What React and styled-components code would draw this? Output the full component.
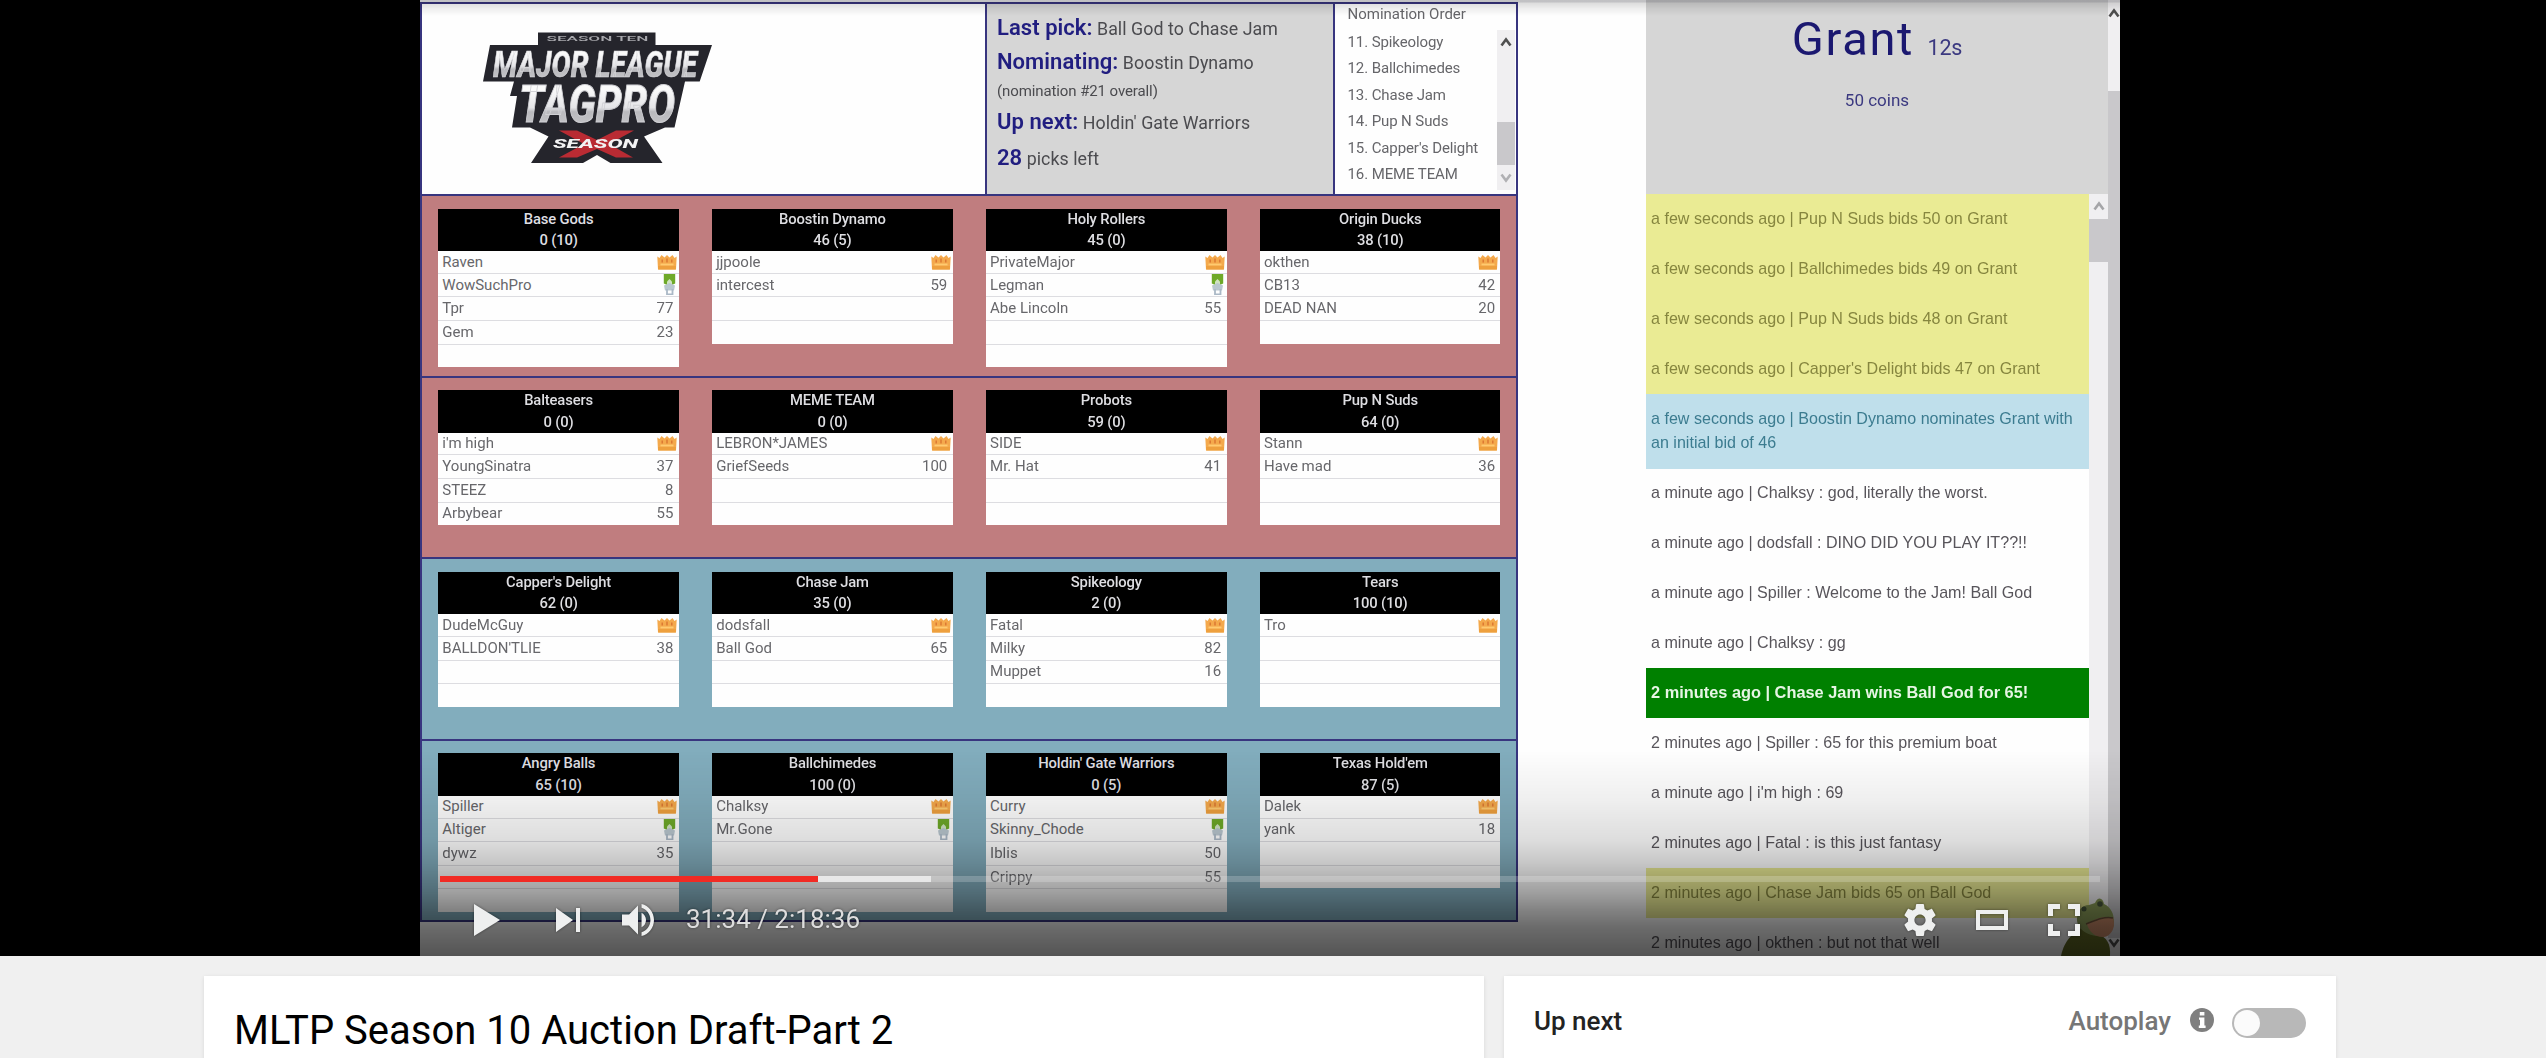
import React from 'react';
import styled, { createGlobalStyle, css } from 'styled-components';

const GlobalStyle = createGlobalStyle`
  * { box-sizing: border-box; }
  body {
    margin: 0;
    background: #f0f0f0;
    font-family: Roboto, "Liberation Sans", sans-serif;
    overflow: hidden;
  }
`;

const NAVY = '#38357f';

/* ---------- data ---------- */

const divisions = [
  {
    tone: '#c07d7f',
    teams: [
      { name: 'Base Gods', coins: '0 (10)', slots: 5, roster: [['Raven', 'crown'], ['WowSuchPro', 'medal'], ['Tpr', '77'], ['Gem', '23']] },
      { name: 'Boostin Dynamo', coins: '46 (5)', slots: 4, roster: [['jjpoole', 'crown'], ['intercest', '59']] },
      { name: 'Holy Rollers', coins: '45 (0)', slots: 5, roster: [['PrivateMajor', 'crown'], ['Legman', 'medal'], ['Abe Lincoln', '55']] },
      { name: 'Origin Ducks', coins: '38 (10)', slots: 4, roster: [['okthen', 'crown'], ['CB13', '42'], ['DEAD NAN', '20']] },
    ],
  },
  {
    tone: '#c07d7f',
    teams: [
      { name: 'Balteasers', coins: '0 (0)', slots: 4, roster: [["i'm high", 'crown'], ['YoungSinatra', '37'], ['STEEZ', '8'], ['Arbybear', '55']] },
      { name: 'MEME TEAM', coins: '0 (0)', slots: 4, roster: [['LEBRON*JAMES', 'crown'], ['GriefSeeds', '100']] },
      { name: 'Probots', coins: '59 (0)', slots: 4, roster: [['SIDE', 'crown'], ['Mr. Hat', '41']] },
      { name: 'Pup N Suds', coins: '64 (0)', slots: 4, roster: [['Stann', 'crown'], ['Have mad', '36']] },
    ],
  },
  {
    tone: '#82adbd',
    teams: [
      { name: "Capper's Delight", coins: '62 (0)', slots: 4, roster: [['DudeMcGuy', 'crown'], ["BALLDON'TLIE", '38']] },
      { name: 'Chase Jam', coins: '35 (0)', slots: 4, roster: [['dodsfall', 'crown'], ['Ball God', '65']] },
      { name: 'Spikeology', coins: '2 (0)', slots: 4, roster: [['Fatal', 'crown'], ['Milky', '82'], ['Muppet', '16']] },
      { name: 'Tears', coins: '100 (10)', slots: 4, roster: [['Tro', 'crown']] },
    ],
  },
  {
    tone: '#82adbd',
    teams: [
      { name: 'Angry Balls', coins: '65 (10)', slots: 5, roster: [['Spiller', 'crown'], ['Altiger', 'medal'], ['dywz', '35']] },
      { name: 'Ballchimedes', coins: '100 (0)', slots: 5, roster: [['Chalksy', 'crown'], ['Mr.Gone', 'medal']] },
      { name: "Holdin' Gate Warriors", coins: '0 (5)', slots: 5, roster: [['Curry', 'crown'], ['Skinny_Chode', 'medal'], ['Iblis', '50'], ['Crippy', '55']] },
      { name: "Texas Hold'em", coins: '87 (5)', slots: 4, roster: [['Dalek', 'crown'], ['yank', '18']] },
    ],
  },
];

const order = ['11. Spikeology', '12. Ballchimedes', '13. Chase Jam', '14. Pup N Suds', "15. Capper's Delight", '16. MEME TEAM'];

const messages = [
  { kind: 'bid', lines: ['a few seconds ago | Pup N Suds bids 50 on Grant'] },
  { kind: 'bid', lines: ['a few seconds ago | Ballchimedes bids 49 on Grant'] },
  { kind: 'bid', lines: ['a few seconds ago | Pup N Suds bids 48 on Grant'] },
  { kind: 'bid', lines: ["a few seconds ago | Capper's Delight bids 47 on Grant"] },
  { kind: 'nominate', lines: ['a few seconds ago | Boostin Dynamo nominates Grant with', 'an initial bid of 46'] },
  { kind: 'chat', lines: ['a minute ago | Chalksy : god, literally the worst.'] },
  { kind: 'chat', lines: ['a minute ago | dodsfall : DINO DID YOU PLAY IT??!!'] },
  { kind: 'chat', lines: ['a minute ago | Spiller : Welcome to the Jam! Ball God'] },
  { kind: 'chat', lines: ['a minute ago | Chalksy : gg'] },
  { kind: 'win', lines: ['2 minutes ago | Chase Jam wins Ball God for 65!'] },
  { kind: 'chat', lines: ['2 minutes ago | Spiller : 65 for this premium boat'] },
  { kind: 'chat', lines: ["a minute ago | i'm high : 69"] },
  { kind: 'chat', lines: ['2 minutes ago | Fatal : is this just fantasy'] },
  { kind: 'bid', lines: ['2 minutes ago | Chase Jam bids 65 on Ball God'] },
  { kind: 'chat', lines: ['2 minutes ago | okthen : but not that well'] },
];

/* ---------- player shell ---------- */

const Page = styled.div`
  height: 1058px;
  overflow: hidden;
`;

const Player = styled.div`
  display: grid;
  grid-template-columns: 420px 1700px 1fr;
  height: 956px;
  background: #000;
`;

const Screen = styled.div`
  grid-column: 2;
  position: relative;
  overflow: hidden;
  background: #fefefe;
`;

const Frame = styled.div`
  display: flex;
  height: 100%;
  filter: blur(0.6px);
`;

const TopShade = styled.div`
  position: absolute;
  inset: 0 0 auto;
  height: 16px;
  background: linear-gradient(rgba(20, 20, 30, 0.26) 0 2px, rgba(0, 0, 0, 0.13) 3px, rgba(0, 0, 0, 0.06) 9px, transparent);
`;

const BottomShade = styled.div`
  position: absolute;
  inset: auto 0 0;
  height: 206px;
  background: linear-gradient(
    transparent,
    rgba(0, 0, 0, 0.06) 24%,
    rgba(0, 0, 0, 0.13) 44%,
    rgba(0, 0, 0, 0.22) 55%,
    rgba(0, 0, 0, 0.37) 69%,
    rgba(0, 0, 0, 0.5) 79%,
    rgba(0, 0, 0, 0.58) 86%,
    rgba(0, 0, 0, 0.67)
  );
`;

/* ---------- draft board ---------- */

const Board = styled.div`
  flex: none;
  width: 1098px;
  height: 920px;
  margin-top: 2px;
  border: 2px solid ${NAVY};
`;

const BoardHeader = styled.div`
  display: grid;
  grid-template-columns: 563px 350px 1fr;
  height: 190px;
`;

const LogoCell = styled.div`
  padding: 26px 0 0 58px;
`;

const StatusCell = styled.div`
  padding: 7px 0 0 10px;
  border: solid ${NAVY};
  border-width: 0 2px;
  background: #d6d6d6;
`;

const StatusLine = styled.div`
  height: ${(p) => p.$h}px;
  line-height: ${(p) => p.$h}px;
  font-size: ${(p) => (p.$small ? 15 : 17.8)}px;
  letter-spacing: ${(p) => (p.$small ? -0.1 : 0.05)}px;
  color: #4b4b4f;
  white-space: nowrap;

  b {
    font-size: 22px;
    font-weight: 600;
    color: #211e80;
  }
`;

const OrderCell = styled.div`
  display: flex;
  flex-direction: column;
  padding: 0 1px 3px 12.5px;
`;

const OrderTitle = styled.div`
  height: 26px;
  line-height: 20px;
  font-size: 15px;
  color: #66666a;
`;

const OrderBody = styled.div`
  display: flex;
  justify-content: space-between;
  height: 160px;
`;

const OrderList = styled.div`
  margin-top: -1.5px;
  font-size: 15px;
  line-height: 26.5px;
  letter-spacing: -0.1px;
  color: #66666a;
  white-space: nowrap;
`;

const ScrollTrack = styled.div`
  display: flex;
  flex-direction: column;
  align-items: center;
  flex: none;
  width: ${(p) => p.$w}px;
  background: #f0eff1;
`;

const ScrollThumb = styled.div`
  width: 100%;
  height: ${(p) => p.$h}px;
  flex: none;
  background: #c9c8cb;
`;

const ScrollSpace = styled.div`
  flex: none;
  height: ${(p) => p.$h}px;
`;

const Division = styled.div`
  display: grid;
  grid-template-columns: repeat(4, 240.5px);
  column-gap: 33.4px;
  align-items: start;
  height: 181.6px;
  padding: 12.7px 0 0 16.3px;
  border-top: 2px solid ${NAVY};
  background: ${(p) => p.$tone};
`;

const Team = styled.div`
  background: #fefefe;
`;

const TeamHead = styled.div`
  height: 42.6px;
  background: #000;
  color: #dedee2;
  text-align: center;
  font-size: 14.8px;
  font-weight: 500;
  line-height: 21.3px;
  letter-spacing: -0.15px;
`;

const Slot = styled.div`
  display: flex;
  align-items: center;
  justify-content: space-between;
  height: 23.6px;
  padding: 0 5.4px 1px 4px;
  font-size: 15px;
  color: #67676b;
  border-top: 1.5px solid #dddde1;

  &:nth-child(2) {
    height: 21.5px;
    border-top: 0;
  }
`;

const BadgeSlot = styled.span`
  display: flex;
  margin-right: ${(p) => (p.$kind === 'crown' ? -3.4 : -2.5)}px;
`;

/* ---------- auction sidebar ---------- */

const Sidebar = styled.div`
  display: flex;
  flex-direction: column;
  flex: none;
  width: 462.9px;
  margin-left: 127.5px;
`;

const LotPanel = styled.div`
  flex: none;
  height: 194.3px;
  padding-top: 5px;
  background: #d6d6d6;
  text-align: center;
  color: #1b1870;
`;

const LotName = styled.div`
  height: 67px;
  line-height: 67px;
  font-size: 47px;
  letter-spacing: 1.7px;

  small {
    font-size: 21.5px;
    letter-spacing: -0.2px;
    color: #3b3980;
  }
`;

const LotCoins = styled.div`
  line-height: 56px;
  font-size: 17px;
  color: #3b3980;
`;

const Feed = styled.div`
  display: flex;
  flex: 1;
  min-height: 0;
  overflow: hidden;
`;

const FeedList = styled.div`
  flex: 1;
  min-width: 0;
`;

const tones = {
  bid: css`background: #eaeb94; color: #86863f;`,
  nominate: css`background: #bfdfeb; color: #3c7c90;`,
  chat: css`color: #58555b;`,
  win: css`background: #008000; color: #e6f5e4; font-weight: 700;`,
};

const Message = styled.div`
  padding: 12.6px 0 13.1px 5.6px;
  font: 17px/24.3px "Liberation Sans", Arial, sans-serif;
  white-space: nowrap;
  ${(p) => tones[p.$kind]}
`;

const MessageLine = styled.div`
  transform: scaleX(${(p) => (p.$bold ? 0.962 : 0.946)});
  transform-origin: left;
`;

const FrogSpot = styled.div`
  position: absolute;
  right: 5px;
  bottom: 0;
  display: flex;
`;

/* ---------- controls ---------- */

const Chrome = styled.div`
  position: absolute;
  inset: auto 0 0;
`;

const Progress = styled.div`
  display: flex;
  height: 6px;
  margin: 0 20px;
  background: rgba(255, 255, 255, 0.2);
`;

const Played = styled.div`
  width: 378px;
  background: #f12b24;
`;

const Buffered = styled.div`
  width: 113px;
  background: rgba(255, 255, 255, 0.63);
`;

const Controls = styled.div`
  display: flex;
  align-items: center;
  height: 74px;
  padding: 2px 40px 0 54px;
  color: #eeefef;

  svg {
    flex: none;
    overflow: visible;
    filter: drop-shadow(0 0 1.5px rgba(0, 0, 0, 0.45));
  }
`;

const Gap = styled.span`
  flex: none;
  width: ${(p) => p.$w}px;
`;

const Time = styled.span`
  flex: 1;
  margin-left: 32px;
  font-size: 26px;
  line-height: 30px;
  padding-bottom: 2px;
  color: #dddddd;
  text-shadow: 0 0 3px rgba(0, 0, 0, 0.5);
`;

const RightControls = styled.div`
  display: flex;
  align-items: center;
  gap: 40px;
`;

/* ---------- below the player ---------- */

const Below = styled.div`
  display: grid;
  grid-template-columns: 1280px 832px;
  column-gap: 20px;
  padding: 20px 0 0 204px;
`;

const Panel = styled.div`
  height: 120px;
  background: #fff;
  box-shadow: 0 1px 4px rgba(0, 0, 0, 0.1);
`;

const Title = styled.h1`
  margin: 0;
  padding: 31px 30px 0;
  font-size: 40px;
  line-height: 48px;
  font-weight: 400;
  color: #000;
`;

const UpNextBar = styled.div`
  display: flex;
  align-items: flex-start;
  padding: 30px 30px 0;
  font-size: 26px;
  line-height: 30px;
  font-weight: 500;
  color: #222;
`;

const Autoplay = styled.span`
  margin-left: auto;
  margin-right: 19px;
  color: #767676;
`;

const InfoBadge = styled.span`
  display: flex;
  margin: 2px 18px 0 0;
`;

const Toggle = styled.span`
  display: flex;
  width: 74px;
  height: 30px;
  padding: 2px;
  margin-top: 2px;
  border-radius: 15px;
  background: #b8b8b8;
`;

const Knob = styled.span`
  width: 26px;
  height: 26px;
  border-radius: 50%;
  background: #fbfbfb;
`;

/* ---------- drawings ---------- */

const Arrow = ({ down, color = '#505050' }) => (
  <svg width="12" height="10" viewBox="0 0 12 10">
    <path d={down ? 'M1.5 1.5 6 7.5 10.5 1.5' : 'M1.5 8.5 6 2.5 10.5 8.5'} fill="none" stroke={color} strokeWidth="2.6" />
  </svg>
);

const Crown = () => (
  <svg width="20" height="16" viewBox="0 0 20 16">
    <path d="M.3 2.5 2.5 4 4.5 1 7.500 3.500 10 1l2.500 2.500L15.500 1l2 3 2.200-1.500L19 15.500H1z" fill="#f4a94c" />
    <path d="M1 12h18l-.3 3.500H1.300z" fill="#eea03e" />
    <path d="M5.200 5.500v3M10 4.500v4M14.800 5.500v3" stroke="#d9722f" strokeWidth="1.300" />
    <path d="M3.500 10.500h13" stroke="#ffcb70" strokeWidth="1.800" />
  </svg>
);

const Medal = () => (
  <svg width="13" height="21" viewBox="0 0 13 21">
    <path d="M.8 0h11.400v9.500L6.500 12 .8 9.500z" fill="#6ea928" />
    <path d="M4 7.500 6.500 5 9 7.500V11H4z" fill="#cfe3c0" />
    <path d="M1 11.500 6.500 9l5.500 2.500-1 5H2z" fill="#b9c7cf" />
    <path d="M4 15v5.500h5.500V15" fill="none" stroke="#aab8c6" strokeWidth="1.800" />
  </svg>
);

const LogoText = styled.text`
  font-family: Roboto, "Liberation Sans", sans-serif;
  font-weight: ${(p) => (p.$plain ? 500 : 800)};
  font-style: ${(p) => (p.$plain ? 'normal' : 'italic')};
  font-size: ${(p) => p.$size}px;
`;

const Logo = () => (
  <svg width="236" height="136" viewBox="480 30 236 136" overflow="visible">
    <defs>
      <linearGradient id="silver" x1="0" y1="0" x2="0" y2="1">
        <stop offset="0.25" stopColor="#fafafa" />
        <stop offset="0.55" stopColor="#e4e4e7" />
        <stop offset="0.62" stopColor="#b9b9bd" />
        <stop offset="1" stopColor="#cacacd" />
      </linearGradient>
    </defs>
    <path
      d="M538 32.500H655.500V45H712L699.700 81.500H685L674.500 127.500H665L644 136.500 662.500 163H610.500L597 155 583 163H531L548.500 136.500 530 127.500H512L517 96H510L514 81.500H483L490 45H538z"
      fill="#25252c"
    />
    <path d="M559 130.500h18L597 140l19-9.500h18L609 144l24 13.500h-17L597 149l-20 8.500h-18L584 144z" fill="#b92b33" />
    <LogoText $plain $size={7.5} x="546.5" y="41.3" textLength="102" lengthAdjust="spacingAndGlyphs" fill="#a8a8ad">
      SEASON TEN
    </LogoText>
    <LogoText $size={36.5} x="493" y="76.5" textLength="204" lengthAdjust="spacingAndGlyphs" fill="url(#silver)" stroke="#dcdcdf" strokeWidth="0.6">
      MAJOR LEAGUE
    </LogoText>
    <LogoText $size={52} x="519" y="122" textLength="156" lengthAdjust="spacingAndGlyphs" fill="url(#silver)" stroke="#d0d0d4" strokeWidth="1">
      TAGPRO
    </LogoText>
    <LogoText $size={12} x="553" y="148.3" textLength="85" lengthAdjust="spacingAndGlyphs" fill="#f3f3f4">
      SEASON
    </LogoText>
  </svg>
);

const Frog = () => (
  <svg width="54" height="59" viewBox="0 0 54 59">
    <path d="M0 59C4 42 12 37 19 31l17 6c10 3 14 10 13 22z" fill="#626a24" />
    <path d="M16 21c1-8 5-13 12-13l6-2c3-7 8-5 9 1 7 3 10 10 10 18 0 9-6 14-15 14-12 0-23-8-22-18z" fill="#8a9c58" />
    <path d="M26 27c7-5 18-9 26-6 3 8-1 18-9 19-8 1-15-5-17-13z" fill="#c98a68" />
    <path d="M25 27c8-3 17-8 27-6" fill="none" stroke="#6a5238" strokeWidth="1.500" />
    <circle cx="39" cy="7" r="2.800" fill="#46553a" />
    <circle cx="23" cy="12" r="2.500" fill="#46553a" />
  </svg>
);

const PlayIcon = () => (
  <svg width="26" height="32" viewBox="0 0 26 32" fill="currentColor"><path d="M0 0 26 16 0 32z" /></svg>
);

const NextIcon = () => (
  <svg width="24" height="24" viewBox="0 0 24 24" fill="currentColor"><path d="M0 0 17 12 0 24zM20 0h4v24h-4z" /></svg>
);

const VolumeIcon = () => (
  <svg width="32" height="32" viewBox="8 9.23 18 17.54" fill="currentColor" preserveAspectRatio="none">
    <path d="M8 21h4l5 5V10l-5 5H8zM19 14v8c1.480-.68 2.500-2.230 2.500-4s-1.020-3.260-2.500-4zM19 11.290c2.890.86 5 3.540 5 6.710s-2.110 5.850-5 6.710v2.060c4.010-.91 7-4.490 7-8.770s-2.990-7.860-7-8.770z" />
  </svg>
);

const GearIcon = () => (
  <svg width="32" height="32" viewBox="10 10 16 16" fill="currentColor">
    <path d="m23.940 18.780c.03-.25.05-.51.05-.78 0-.27-.02-.52-.05-.78l1.680-1.320c.15-.12.19-.33.09-.51l-1.600-2.760c-.09-.17-.31-.24-.48-.17l-1.990.8c-.41-.32-.86-.58-1.350-.78l-.3-2.120c-.02-.19-.19-.33-.39-.33h-3.200c-.2 0-.36.14-.39.33l-.3 2.120c-.48.2-.93.47-1.350.78l-1.990-.8c-.18-.07-.39 0-.48.17l-1.600 2.760c-.1.17-.05.39.09.51l1.680 1.320c-.03.25-.05.52-.05.78 0 .26.02.52.05.78l-1.680 1.320c-.15.12-.19.33-.09.51l1.600 2.760c.09.17.31.24.48.17l1.990-.8c.41.32.86.58 1.350.78l.3 2.120c.02.19.19.33.39.33h3.200c.2 0 .36-.14.39-.33l.3-2.120c.48-.2.93-.47 1.350-.78l1.990.8c.18.07.39 0 .48-.17l1.600-2.760c.09-.17.05-.39-.09-.51l-1.680-1.320zm-5.940 2.010c-1.540 0-2.800-1.250-2.800-2.800 0-1.540 1.250-2.800 2.800-2.800 1.540 0 2.800 1.250 2.800 2.800 0 1.540-1.250 2.800-2.800 2.800z" />
  </svg>
);

const TheaterIcon = () => (
  <svg width="32" height="20" viewBox="0 0 32 20"><path d="M2 2h28v16H2z" fill="none" stroke="currentColor" strokeWidth="4" /></svg>
);

const FullscreenIcon = () => (
  <svg width="32" height="32" viewBox="0 0 32 32">
    <path d="M2.500 12V2.500H12M20 2.500h9.500V12M29.500 20v9.500H20M12 29.500H2.500V20" fill="none" stroke="currentColor" strokeWidth="5" />
  </svg>
);

const InfoIcon = () => (
  <svg width="24" height="24" viewBox="0 0 24 24">
    <circle cx="12" cy="12" r="12" fill="#7f7f7f" />
    <path d="M9.800 4h4.600v3.400H9.800zM9 9.400h5.400v8.200h1.200V20H8.800v-2.400H10v-5.800H9z" fill="#fff" />
  </svg>
);

/* ---------- composition ---------- */

const Badge = ({ value }) =>
  value === 'crown' || value === 'medal' ? (
    <BadgeSlot $kind={value}>{value === 'crown' ? <Crown /> : <Medal />}</BadgeSlot>
  ) : (
    <span>{value}</span>
  );

const TeamCard = ({ team }) => (
  <Team>
    <TeamHead>
      <div>{team.name}</div>
      <div>{team.coins}</div>
    </TeamHead>
    {Array.from({ length: team.slots }, (_, i) => {
      const entry = team.roster[i];
      return (
        <Slot key={i}>
          {entry && <span>{entry[0]}</span>}
          {entry && <Badge value={entry[1]} />}
        </Slot>
      );
    })}
  </Team>
);

export default function App() {
  return (
    <Page>
      <GlobalStyle />
      <Player>
        <Screen>
          <Frame>
            <Board>
              <BoardHeader>
                <LogoCell><Logo /></LogoCell>
                <StatusCell>
                  <StatusLine $h={34}><b>Last pick:</b> Ball God to Chase Jam</StatusLine>
                  <StatusLine $h={34}><b>Nominating:</b> Boostin Dynamo</StatusLine>
                  <StatusLine $h={24} $small>(nomination #21 overall)</StatusLine>
                  <StatusLine $h={38}><b>Up next:</b> Holdin' Gate Warriors</StatusLine>
                  <StatusLine $h={34}><b>28</b> picks left</StatusLine>
                </StatusCell>
                <OrderCell>
                  <OrderTitle>Nomination Order</OrderTitle>
                  <OrderBody>
                    <OrderList>
                      {order.map((o) => <div key={o}>{o}</div>)}
                    </OrderList>
                    <ScrollTrack $w={18}>
                      <ScrollSpace $h={7} />
                      <Arrow />
                      <ScrollSpace $h={75} />
                      <ScrollThumb $h={43} />
                      <ScrollSpace $h={8} />
                      <Arrow down color="#b0b0b3" />
                    </ScrollTrack>
                  </OrderBody>
                </OrderCell>
              </BoardHeader>
              {divisions.map((d, i) => (
                <Division key={i} $tone={d.tone}>
                  {d.teams.map((t) => <TeamCard key={t.name} team={t} />)}
                </Division>
              ))}
            </Board>
            <Sidebar>
              <LotPanel>
                <LotName>Grant <small>12s</small></LotName>
                <LotCoins>50 coins</LotCoins>
              </LotPanel>
              <Feed>
                <FeedList>
                  {messages.map((m, i) => (
                    <Message key={i} $kind={m.kind}>
                      {m.lines.map((l) => <MessageLine key={l} $bold={m.kind === 'win'}>{l}</MessageLine>)}
                    </Message>
                  ))}
                </FeedList>
                <ScrollTrack $w={19.3}>
                  <ScrollSpace $h={7} />
                  <Arrow color="#a5a5a8" />
                  <ScrollSpace $h={8} />
                  <ScrollThumb $h={42.5} />
                </ScrollTrack>
              </Feed>
            </Sidebar>
            <ScrollTrack $w={12}>
              <ScrollSpace $h={8} />
              <Arrow />
              <ScrollSpace $h={73} />
              <ScrollThumb $h={847} />
              <Arrow down />
            </ScrollTrack>
          </Frame>
          <FrogSpot><Frog /></FrogSpot>
          <TopShade />
          <BottomShade />
          <Chrome>
            <Progress>
              <Played />
              <Buffered />
            </Progress>
            <Controls>
              <PlayIcon />
              <Gap $w={56} />
              <NextIcon />
              <Gap $w={42} />
              <VolumeIcon />
              <Time>31:34 / 2:18:36</Time>
              <RightControls>
                <GearIcon />
                <TheaterIcon />
                <FullscreenIcon />
              </RightControls>
            </Controls>
          </Chrome>
        </Screen>
      </Player>
      <Below>
        <Panel>
          <Title>MLTP Season 10 Auction Draft-Part 2</Title>
        </Panel>
        <Panel>
          <UpNextBar>
            <span>Up next</span>
            <Autoplay>Autoplay</Autoplay>
            <InfoBadge><InfoIcon /></InfoBadge>
            <Toggle><Knob /></Toggle>
          </UpNextBar>
        </Panel>
      </Below>
    </Page>
  );
}
